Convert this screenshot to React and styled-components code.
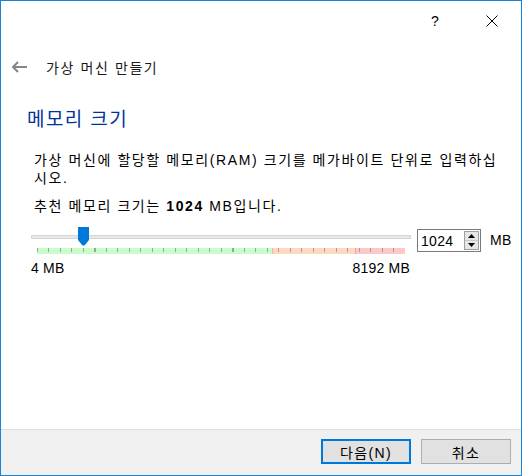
import React from "react";
import styled, { createGlobalStyle } from "styled-components";

const Global = createGlobalStyle`
  html, body { margin: 0; padding: 0; background: #ffffff; }
  * { box-sizing: border-box; }
`;

const FONT = `"Liberation Sans", "Noto Sans CJK KR", sans-serif`;

const Window = styled.div`
  width: 522px;
  height: 476px;
  border: 1px solid #1883d7;
  background: #ffffff;
  display: flex;
  flex-direction: column;
  font-family: ${FONT};
  font-size: 14px;
  letter-spacing: 1.6px;
  color: #000;
`;

const TitleBar = styled.div`
  height: 39px;
  display: flex;
  justify-content: flex-end;
  align-items: center;
  padding-right: 9px;
`;

const CaptionButton = styled.div`
  width: 40px;
  height: 30px;
  display: flex;
  align-items: center;
  justify-content: center;
  margin-left: ${(p) => p.$gap || 0}px;
  font-size: 14px;
  letter-spacing: 0;
  color: #000;
`;

const Content = styled.div`
  flex: 1;
  display: flex;
  flex-direction: column;
`;

const NavRow = styled.div`
  margin-top: 14px;
  height: 26px;
  display: flex;
  align-items: center;
  padding-left: 10px;
  gap: 18px;
  color: #1a1a1a;
`;

const Heading = styled.h1`
  margin: 28px 0 0 26px;
  font-size: 19px;
  line-height: 24px;
  font-weight: normal;
  letter-spacing: 1.4px;
  color: #003399;
`;

const Body = styled.div`
  padding-left: 33px;
  padding-right: 10px;
`;

const Paragraph = styled.p`
  margin: ${(p) => p.$top}px 0 0 0;
  line-height: 18px;
`;

const Line = styled.span`
  display: block;
  white-space: nowrap;
`;

const SliderRow = styled.div`
  margin-top: 12px;
  padding-left: 30px;
  display: flex;
  align-items: flex-start;
`;

const SliderArea = styled.div`
  width: 380px;
  display: flex;
  flex-direction: column;
`;

const TrackWrap = styled.div`
  position: relative;
  height: 20px;
`;

const Track = styled.div`
  position: absolute;
  left: 0;
  right: 0;
  top: 8px;
  height: 4px;
  background: #e7e7e7;
  border: 1px solid #d6d6d6;
`;

const Thumb = styled.svg`
  position: absolute;
  top: 0;
  left: 47px;
`;

const ZoneBar = styled.div`
  margin: 1px 6px 0 6px;
  height: 6px;
  background: linear-gradient(
    to right,
    #c8fcc8 0px,
    #c8fcc8 235px,
    #f2b898 235px,
    #f2b898 236px,
    #ffd8c2 236px,
    #ffd8c2 318px,
    #f59a92 318px,
    #f59a92 319px,
    #ffc8c8 319px,
    #ffc8c8 100%
  );
`;

const Ticks = styled.div`
  width: 358px;
  height: 4px;
  background: repeating-linear-gradient(
    to right,
    #a0a0a0 0px,
    #a0a0a0 1px,
    transparent 1px,
    transparent 11.5px
  );
`;

const Labels = styled.div`
  margin-top: 5px;
  display: flex;
  justify-content: space-between;
  padding-right: 1px;
  line-height: 18px;
  letter-spacing: 0.2px;
`;

const SpinBox = styled.div`
  margin: 2px 0 0 6px;
  width: 64px;
  height: 23px;
  border: 1px solid #7a7a7a;
  display: flex;
  align-items: center;
  justify-content: space-between;
  padding: 0 1px 0 3px;
  letter-spacing: 0.3px;
  font-size: 14px;
`;

const SpinButtons = styled.div`
  width: 15px;
  height: 19px;
  border: 1px solid #a0a0a0;
  background: #e6e6e6;
  display: flex;
  flex-direction: column;
`;

const SpinHalf = styled.div`
  flex: 1;
  display: flex;
  align-items: center;
  justify-content: center;
  border-top: ${(p) => (p.$lower ? "1px solid #c8c8c8" : "none")};
`;

const Unit = styled.span`
  margin: 4px 0 0 9px;
  line-height: 18px;
  font-size: 14px;
  letter-spacing: 0.3px;
`;

const Footer = styled.div`
  height: 46px;
  border-top: 1px solid #dfdfdf;
  background: #f0f0f0;
  display: flex;
  justify-content: flex-end;
  align-items: flex-start;
  padding: 9px 10px 0 0;
  gap: 10px;
`;

const Button = styled.div`
  width: 90px;
  height: 25px;
  background: #e1e1e1;
  border: ${(p) => (p.$default ? "2px solid #0078d7" : "1px solid #adadad")};
  display: flex;
  align-items: center;
  justify-content: center;
  font-size: 14px;
  letter-spacing: 1.4px;
`;

export default function App() {
  return (
    <>
      <Global />
      <Window>
        <TitleBar>
          <CaptionButton>?</CaptionButton>
          <CaptionButton $gap={17}>
            <svg width="12" height="12" viewBox="0 0 12 12">
              <path d="M0.5 0.5 L11.5 11.5 M11.5 0.5 L0.5 11.5" stroke="#000" strokeWidth="1" fill="none" />
            </svg>
          </CaptionButton>
        </TitleBar>
        <Content>
          <NavRow>
            <svg width="17" height="12" viewBox="0 0 17 12">
              <path d="M2 6 H16 M7 1 L2 6 L7 11" stroke="#858585" strokeWidth="2" fill="none" />
            </svg>
            <span>가상 머신 만들기</span>
          </NavRow>
          <Heading>메모리 크기</Heading>
          <Body>
            <Paragraph $top={19}>
              <Line>가상 머신에 할당할 메모리(RAM) 크기를 메가바이트 단위로 입력하십</Line>
              <Line>시오.</Line>
            </Paragraph>
            <Paragraph $top={10}>
              <Line>
                추천 메모리 크기는 <b>1024</b> MB입니다.
              </Line>
            </Paragraph>
          </Body>
          <SliderRow>
            <SliderArea>
              <TrackWrap>
                <Track />
                <Thumb width="11" height="19" viewBox="0 0 11 19">
                  <path d="M0 0 H11 V13 L6.5 18.5 H4.5 L0 13 Z" fill="#0078d7" />
                </Thumb>
              </TrackWrap>
              <ZoneBar>
                <Ticks />
              </ZoneBar>
              <Labels>
                <span>4 MB</span>
                <span>8192 MB</span>
              </Labels>
            </SliderArea>
            <SpinBox>
              <span>1024</span>
              <SpinButtons>
                <SpinHalf>
                  <svg width="7" height="4" viewBox="0 0 7 4">
                    <path d="M0 4 L3.5 0 L7 4 Z" fill="#000" />
                  </svg>
                </SpinHalf>
                <SpinHalf $lower>
                  <svg width="7" height="4" viewBox="0 0 7 4">
                    <path d="M0 0 L3.5 4 L7 0 Z" fill="#000" />
                  </svg>
                </SpinHalf>
              </SpinButtons>
            </SpinBox>
            <Unit>MB</Unit>
          </SliderRow>
        </Content>
        <Footer>
          <Button $default>다음(N)</Button>
          <Button>취소</Button>
        </Footer>
      </Window>
    </>
  );
}
